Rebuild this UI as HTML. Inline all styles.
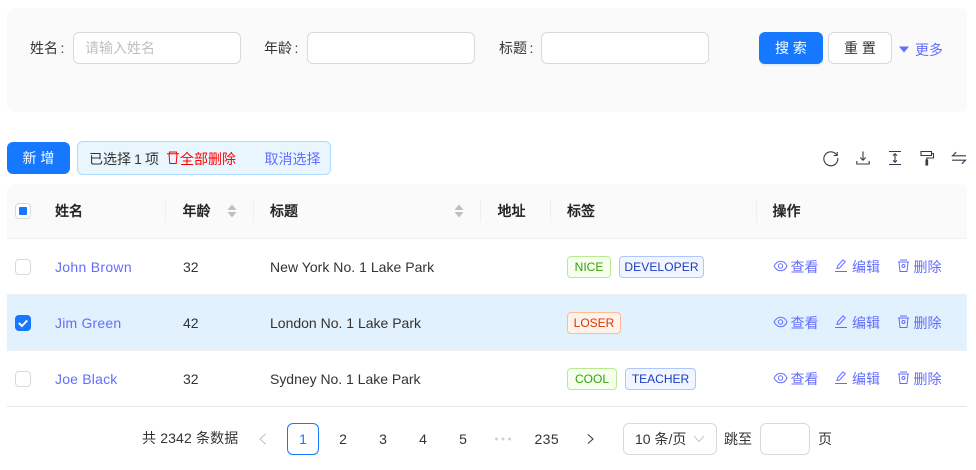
<!DOCTYPE html>
<html><head><meta charset="utf-8">
<style>
html,body{margin:0;padding:0;background:#fff}
#r{position:relative;width:976px;height:470px;overflow:hidden;font:14px/22px "Liberation Sans","Noto Sans CJK SC",sans-serif;color:#333}
#r div,#r span.a,#r svg{position:absolute}
.t{white-space:nowrap}
.inp{height:30px;width:166px;border:1px solid #d9d9d9;border-radius:6px;background:#fff;top:32px}
.btn{border-radius:6px;text-align:center;box-sizing:border-box;height:32px;line-height:30px;white-space:nowrap}
.lnk{color:#646cff}
.th{font-weight:500;color:#222;top:200px;-webkit-text-stroke:.3px #222}
.sep{width:1px;height:22px;background:#efefef;top:200px}
.tag{height:20px;line-height:20px;border:1px solid;border-radius:4px;font-size:12px;text-align:center;box-sizing:content-box;white-space:nowrap}
.g{background:#f6ffed;border-color:#b7eb8f;color:#389e0d}
.b{background:#f0f5ff;border-color:#adc6ff;color:#1d39c4}
.o{background:#fff2e8;border-color:#ffbb96;color:#d4380d}
.cb{left:15px;width:14px;height:14px;border:1px solid #d9d9d9;border-radius:4px;background:#fff}
.pg{top:431px;width:32px;text-align:center;line-height:22px}
</style></head><body>
<div id="r">
<div style="left:7px;top:8px;width:960px;height:104px;background:#fafafa;border-radius:8px"></div>

<div class="t" style="left:30px;top:37px">姓名<span style="margin-left:2.500px">:</span></div>
<div class="inp" style="left:73px"></div>
<div class="t" style="left:85px;top:37px;color:#bfbfbf">请输入姓名</div>
<div class="t" style="left:264px;top:37px">年龄<span style="margin-left:2.500px">:</span></div>
<div class="inp" style="left:307px"></div>
<div class="t" style="left:499px;top:37px">标题<span style="margin-left:2.500px">:</span></div>
<div class="inp" style="left:541px"></div>

<div class="btn" style="left:759px;top:32px;width:64px;background:#1677ff;color:#fff;line-height:32px;box-shadow:0 2px 0 rgba(5,145,255,.1)">搜 索</div>
<div class="btn" style="left:828px;top:32px;width:64px;background:#fff;border:1px solid #d9d9d9;color:#333">重 置</div>
<svg style="left:899px;top:46px" width="10" height="7" viewBox="0 0 10 7"><path d="M0 0.5H10L5 6.5Z" fill="#646cff"/></svg>
<div class="t lnk" style="left:915px;top:39px">更多</div>

<div class="btn" style="left:7px;top:142px;width:63px;background:#1677ff;color:#fff;line-height:32px">新 增</div>
<div style="left:77px;top:141px;width:252px;height:32px;background:#e9f6fe;border:1px solid #abdcff;border-radius:6px"></div>
<div class="t" style="left:89px;top:148px;word-spacing:-.8px">已选择 1 项</div>
<svg style="left:166px;top:151px" width="14" height="14" viewBox="0 0 14 14" fill="none" stroke="#ff0000" stroke-width="1"><path d="M1 2.800H13M3.500 2.800V1H10.500V2.800M3 2.800L3.800 12.500H10.200L11 2.800"/></svg>
<div class="t" style="left:180px;top:148px;color:#ff0000">全部删除</div>
<div class="t lnk" style="left:264.500px;top:148px">取消选择</div>

<svg style="left:822px;top:149px" width="18" height="18" viewBox="0 0 18 18" fill="none" stroke="#2c3e50" stroke-width="1.1"><path d="M14.600 5.800A7 7 0 1 0 15.800 9"/><path d="M15.200 3V6.500H11.800"/></svg>
<svg style="left:854px;top:149px" width="18" height="18" viewBox="0 0 18 18" fill="none" stroke="#2c3e50" stroke-width="1.1"><path d="M9 2.500V11M6.300 8.500L9 11.200L11.700 8.500M2.800 12V15H15.200V12"/></svg>
<svg style="left:886px;top:149px" width="18" height="18" viewBox="0 0 18 18" fill="none" stroke="#2c3e50" stroke-width="1.1"><path d="M3 2.500H15M3 15.500H15M9 5V13M7 6.600L9 4.800L11 6.600M7 11.400L9 13.200L11 11.400"/></svg>
<svg style="left:918px;top:149px" width="18" height="18" viewBox="0 0 18 18" fill="none" stroke="#2c3e50" stroke-width="1.1"><path d="M3 2.500H13.500V6.500H3ZM13.500 4.500H15.500V9H8.800V11"/><rect x="8" y="11" width="1.600" height="5" fill="#2c3e50"/></svg>
<svg style="left:950px;top:149px" width="18" height="18" viewBox="0 0 18 18" fill="none" stroke="#2c3e50" stroke-width="1.1"><path d="M16 6.800H2.500L6.200 3.200M2 11.200H15.500L11.800 14.800"/></svg>

<div style="left:7px;top:184px;width:960px;height:54px;background:#fafafa;border-radius:8px 8px 0 0;border-bottom:1px solid #f0f0f0"></div>
<div class="cb" style="top:203px"></div>
<div style="left:19px;top:207px;width:8px;height:8px;background:#1677ff;border-radius:1px"></div>
<div class="t th" style="left:55px">姓名</div>
<div class="sep" style="left:165px"></div>
<div class="t th" style="left:182.500px">年龄</div>
<svg style="left:227px;top:204px" width="10" height="14" viewBox="0 0 10 14" fill="#bfbfbf"><path d="M5 0.500L9.500 6H0.500ZM0.500 8H9.500L5 13.500Z"/></svg>
<div class="sep" style="left:253px"></div>
<div class="t th" style="left:270px">标题</div>
<svg style="left:454px;top:204px" width="10" height="14" viewBox="0 0 10 14" fill="#bfbfbf"><path d="M5 0.500L9.500 6H0.500ZM0.500 8H9.500L5 13.500Z"/></svg>
<div class="sep" style="left:480px"></div>
<div class="t th" style="left:497.500px">地址</div>
<div class="sep" style="left:550px"></div>
<div class="t th" style="left:567px">标签</div>
<div class="sep" style="left:756px"></div>
<div class="t th" style="left:772.500px">操作</div>

<div style="left:7px;top:295px;width:960px;height:55px;background:#e1f1fe"></div>
<div style="left:7px;top:294px;width:960px;height:1px;background:#f0f0f0"></div>
<div style="left:7px;top:350px;width:960px;height:1px;background:#f0f0f0"></div>
<div style="left:7px;top:406px;width:960px;height:1px;background:#e8e8e8"></div>

<div class="cb" style="top:259px"></div>
<div class="cb" style="top:315px;background:#1677ff;border-color:#1677ff"></div>
<svg style="left:15px;top:315px" width="16" height="16" viewBox="0 0 16 16" fill="none" stroke="#fff" stroke-width="2"><path d="M3.800 8L7 11L12.200 5.500"/></svg>
<div class="cb" style="top:371px"></div>

<div class="t lnk" style="left:55px;top:256px;letter-spacing:.3px">John Brown</div>
<div class="t lnk" style="left:55px;top:312px;letter-spacing:.2px">Jim Green</div>
<div class="t lnk" style="left:55px;top:368px;letter-spacing:.2px">Joe Black</div>
<div class="t" style="left:183px;top:256px">32</div>
<div class="t" style="left:183px;top:312px">42</div>
<div class="t" style="left:183px;top:368px">32</div>
<div class="t" style="left:270px;top:256px;letter-spacing:.03px">New York No. 1 Lake Park</div>
<div class="t" style="left:270px;top:312px;letter-spacing:0">London No. 1 Lake Park</div>
<div class="t" style="left:270px;top:368px;letter-spacing:-.02px">Sydney No. 1 Lake Park</div>

<div class="tag g" style="left:567px;top:256px;width:42px">NICE</div>
<div class="tag b" style="left:619px;top:256px;width:83px;letter-spacing:.1px">DEVELOPER</div>
<div class="tag o" style="left:567px;top:312px;width:52px">LOSER</div>
<div class="tag g" style="left:567px;top:368px;width:48px">COOL</div>
<div class="tag b" style="left:625px;top:368px;width:69px">TEACHER</div>

<svg style="left:773px;top:259px" width="16" height="14" viewBox="0 0 16 14" fill="none" stroke="#646cff" stroke-width="1"><path d="M1 7C3 3.500 5.300 2.200 7.500 2.200S12.500 3.500 14 7C12.500 10.500 9.700 11.800 7.500 11.800S3 10.500 1 7Z"/><circle cx="7.500" cy="7" r="2.200"/></svg>
<div class="t lnk" style="left:790.500px;top:256px">查看</div>
<svg style="left:834px;top:258px" width="14" height="15" viewBox="0 0 14 15" fill="none" stroke="#646cff" stroke-width="1"><path d="M3 10.500L3.500 8L9 1.800L11.200 3.800L5.500 10Z M1 13.500H13"/></svg>
<div class="t lnk" style="left:852px;top:256px">编辑</div>
<svg style="left:897px;top:259px" width="13" height="15" viewBox="0 0 13 15" fill="none" stroke="#646cff" stroke-width="1"><path d="M1 3H12M3 1H10M2 3L3 12.500H10L11 3"/><circle cx="6.500" cy="7" r="1.500"/></svg>
<div class="t lnk" style="left:913.500px;top:256px">删除</div>

<svg style="left:773px;top:315px" width="16" height="14" viewBox="0 0 16 14" fill="none" stroke="#646cff" stroke-width="1"><path d="M1 7C3 3.500 5.300 2.200 7.500 2.200S12.500 3.500 14 7C12.500 10.500 9.700 11.800 7.500 11.800S3 10.500 1 7Z"/><circle cx="7.500" cy="7" r="2.200"/></svg>
<div class="t lnk" style="left:790.500px;top:312px">查看</div>
<svg style="left:834px;top:314px" width="14" height="15" viewBox="0 0 14 15" fill="none" stroke="#646cff" stroke-width="1"><path d="M3 10.500L3.500 8L9 1.800L11.200 3.800L5.500 10Z M1 13.500H13"/></svg>
<div class="t lnk" style="left:852px;top:312px">编辑</div>
<svg style="left:897px;top:315px" width="13" height="15" viewBox="0 0 13 15" fill="none" stroke="#646cff" stroke-width="1"><path d="M1 3H12M3 1H10M2 3L3 12.500H10L11 3"/><circle cx="6.500" cy="7" r="1.500"/></svg>
<div class="t lnk" style="left:913.500px;top:312px">删除</div>

<svg style="left:773px;top:371px" width="16" height="14" viewBox="0 0 16 14" fill="none" stroke="#646cff" stroke-width="1"><path d="M1 7C3 3.500 5.300 2.200 7.500 2.200S12.500 3.500 14 7C12.500 10.500 9.700 11.800 7.500 11.800S3 10.500 1 7Z"/><circle cx="7.500" cy="7" r="2.200"/></svg>
<div class="t lnk" style="left:790.500px;top:368px">查看</div>
<svg style="left:834px;top:370px" width="14" height="15" viewBox="0 0 14 15" fill="none" stroke="#646cff" stroke-width="1"><path d="M3 10.500L3.500 8L9 1.800L11.200 3.800L5.500 10Z M1 13.500H13"/></svg>
<div class="t lnk" style="left:852px;top:368px">编辑</div>
<svg style="left:897px;top:371px" width="13" height="15" viewBox="0 0 13 15" fill="none" stroke="#646cff" stroke-width="1"><path d="M1 3H12M3 1H10M2 3L3 12.500H10L11 3"/><circle cx="6.500" cy="7" r="1.500"/></svg>
<div class="t lnk" style="left:913.500px;top:368px">删除</div>

<div class="t" style="left:142px;top:427px;letter-spacing:.15px">共 2342 条数据</div>
<svg style="left:258px;top:433px" width="10" height="12" viewBox="0 0 10 12" fill="none" stroke="#bfbfbf" stroke-width="1"><path d="M7.500 1L2 6L7.500 11"/></svg>
<div style="left:287px;top:423px;width:30px;height:30px;border:1px solid #1677ff;border-radius:6px"></div>
<div class="pg" style="left:287px;top:428px;color:#1677ff">1</div>
<div class="pg" style="left:327px;top:428px">2</div>
<div class="pg" style="left:367px;top:428px">3</div>
<div class="pg" style="left:407px;top:428px">4</div>
<div class="pg" style="left:447px;top:428px">5</div>
<svg style="left:494px;top:436px" width="20" height="6" viewBox="0 0 20 6" fill="#d0d0d0"><circle cx="2.500" cy="3" r="1.500"/><circle cx="9" cy="3" r="1.500"/><circle cx="15.500" cy="3" r="1.500"/></svg>
<div class="t" style="left:534.500px;top:428px;letter-spacing:.4px">235</div>
<svg style="left:586px;top:433px" width="10" height="12" viewBox="0 0 10 12" fill="none" stroke="#333" stroke-width="1"><path d="M2 1.500L7 6L2 10.500"/></svg>
<div style="left:623px;top:423px;width:92px;height:30px;border:1px solid #d9d9d9;border-radius:6px;background:#fff"></div>
<div class="t" style="left:635px;top:428px">10 条/页</div>
<svg style="left:693px;top:434px" width="12" height="10" viewBox="0 0 12 10" fill="none" stroke="#c8c8c8" stroke-width="1"><path d="M1 2L6 7.500L11 2"/></svg>
<div class="t" style="left:724px;top:428px">跳至</div>
<div style="left:760px;top:423px;width:48px;height:30px;border:1px solid #d9d9d9;border-radius:6px;background:#fff"></div>
<div class="t" style="left:818px;top:428px">页</div>
</div>
</body></html>
